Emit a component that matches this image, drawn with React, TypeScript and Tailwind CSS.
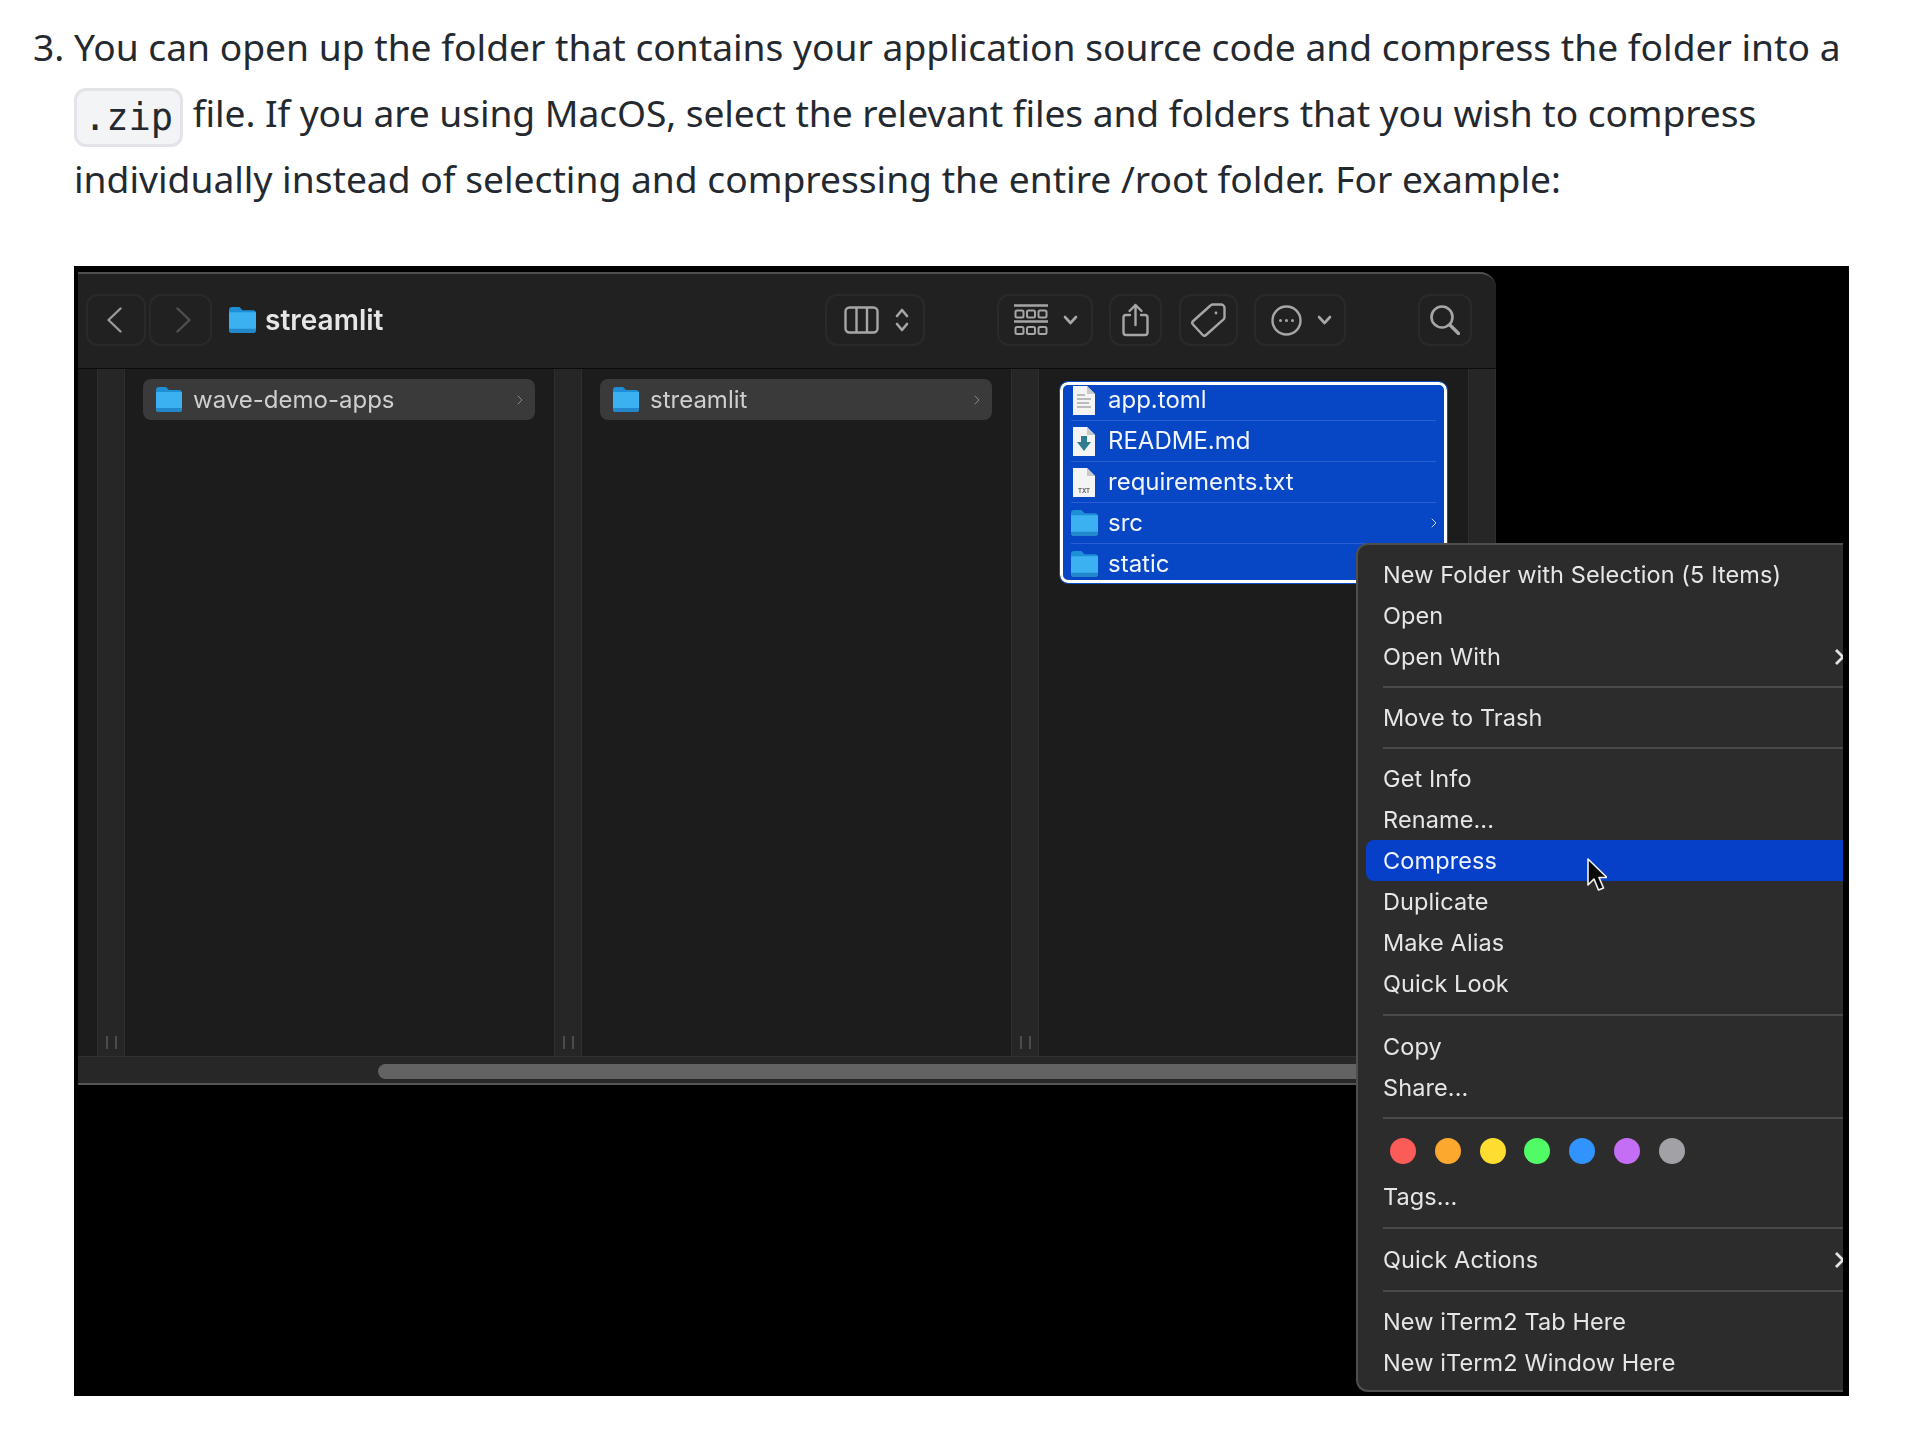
import React from 'react';
import { ChevronRight } from 'lucide-react';

const Folder: React.FC<{ className: string }> = ({ className }) => (
  <svg viewBox="0 0 26 25" className={className}>
    <path d="M0 3a3 3 0 0 1 3-3h7l3 3h10a3 3 0 0 1 3 3v2H0z" fill="#1e8fd6" />
    <path d="M0 5h26v17a3 3 0 0 1-3 3H3a3 3 0 0 1-3-3z" fill="#3bb1f1" />
    <path d="M0 21h26v1a3 3 0 0 1-3 3H3a3 3 0 0 1-3-3z" fill="#2388cb" />
  </svg>
);

const Doc: React.FC<{ kind: 'text' | 'md' | 'txt' }> = ({ kind }) => (
  <svg viewBox="0 0 22 29" className="w-[22px] h-[29px] shrink-0">
    <path d="M0 0h14l8 8v21H0z" fill="#f4f4f4" />
    <path d="M14 0l8 8h-8z" fill="#c9c9c9" />
    {kind === 'text' && (
      <g stroke="#a8a8a8" strokeWidth="1.5">
        <path d="M4 9h8M4 13h14M4 17h12M4 21h14" />
      </g>
    )}
    {kind === 'md' && <path d="M8 9h6v6h4l-7 9-7-9h4z" fill="#2f7d94" />}
    {kind === 'txt' && (
      <text x="11" y="25" textAnchor="middle" fontSize="6" fontWeight="700" fill="#666" fontFamily="Inter, sans-serif">
        TXT
      </text>
    )}
  </svg>
);

const ToolButton: React.FC<{ className: string; children: React.ReactNode }> = ({ className, children }) => (
  <div className={`h-[52px] shrink-0 flex items-center justify-center rounded-[12px] border-2 border-[#2a2a2a] ${className}`}>
    {children}
  </div>
);

const Chevron = () => (
  <svg viewBox="0 0 15 10" className="w-[15px] h-[10px]" fill="none" stroke="#a6a6a6" strokeWidth="2.6" strokeLinecap="round" strokeLinejoin="round">
    <path d="M2 2l5.5 6L13 2" />
  </svg>
);

const Toolbar = () => (
  <div className="h-[97px] shrink-0 bg-[#212121] border-t-2 border-[#4f4f4f] border-b border-b-[#0c0c0c] rounded-tr-[16px] flex items-center justify-between pl-2 pr-6 pb-[2px] text-[#e6e6e6]">
    <div className="flex items-center">
      <ToolButton className="w-[60px] pr-[3px]">
        <svg viewBox="0 0 15 26" className="w-[15px] h-[26px]" fill="none" stroke="#9a9a9a" strokeWidth="2.4" strokeLinecap="round" strokeLinejoin="round">
          <path d="M13.5 1.5L1.5 13l12 11.5" />
        </svg>
      </ToolButton>
      <ToolButton className="w-[63px] ml-[3px] pl-[5px]">
        <svg viewBox="0 0 15 26" className="w-[15px] h-[26px]" fill="none" stroke="#505050" strokeWidth="2.4" strokeLinecap="round" strokeLinejoin="round">
          <path d="M1.5 1.5L13.5 13l-12 11.5" />
        </svg>
      </ToolButton>
      <Folder className="w-[27px] h-[26px] ml-[17px]" />
      <span className="ml-[9px] text-[28px] font-semibold leading-none">streamlit</span>
    </div>
    <div className="flex items-center">
      <ToolButton className="w-[100px] gap-[16px] pl-[3px]">
        <svg viewBox="0 0 35 28" className="w-[35px] h-[28px]" fill="none" stroke="#a6a6a6" strokeWidth="2.4">
          <rect x="1.5" y="1.5" width="32" height="25" rx="4" />
          <path d="M12.5 1.5v25M23 1.5v25" />
        </svg>
        <svg viewBox="0 0 14 24" className="w-[14px] h-[24px]" fill="none" stroke="#a6a6a6" strokeWidth="2.6" strokeLinecap="round" strokeLinejoin="round">
          <path d="M2 8l5-6 5 6M2 16l5 6 5-6" />
        </svg>
      </ToolButton>
      <ToolButton className="w-[96px] ml-[72px] gap-[15px] pl-[2px]">
        <svg viewBox="0 0 34 32" className="w-[34px] h-[32px]" fill="none" stroke="#a6a6a6" strokeWidth="2">
          <path d="M0 1.5h34M0 17.5h34" strokeWidth="2.4" />
          <rect x="1.5" y="6.5" width="8" height="7" rx="1.5" />
          <rect x="13" y="6.5" width="8" height="7" rx="1.5" />
          <rect x="24.5" y="6.5" width="8" height="7" rx="1.5" />
          <rect x="1.5" y="23" width="8" height="7" rx="1.5" />
          <rect x="13" y="23" width="8" height="7" rx="1.5" />
          <rect x="24.5" y="23" width="8" height="7" rx="1.5" />
        </svg>
        <Chevron />
      </ToolButton>
      <ToolButton className="w-[53px] ml-[16px]">
        <svg viewBox="0 0 27 34" className="w-[27px] h-[34px]" fill="none" stroke="#a6a6a6" strokeWidth="2.4" strokeLinecap="round" strokeLinejoin="round">
          <path d="M8 12H4a2.5 2.5 0 0 0-2.5 2.5v15A2.5 2.5 0 0 0 4 32h19a2.5 2.5 0 0 0 2.5-2.5v-15A2.5 2.5 0 0 0 23 12h-4" />
          <path d="M13.5 22V2M7.5 8l6-6 6 6" />
        </svg>
      </ToolButton>
      <ToolButton className="w-[59px] ml-[17px]">
        <svg viewBox="0 0 35 34" className="w-[35px] h-[34px]" fill="none" stroke="#a6a6a6" strokeWidth="2.4" strokeLinejoin="round">
          <path d="M22 1.5h8a3.5 3.5 0 0 1 3.5 3.5v9a3 3 0 0 1-1 2.4L15 32a2.5 2.5 0 0 1-3.5-.2L2 21.5a2.5 2.5 0 0 1 .2-3.5L19.5 2.5a3.5 3.5 0 0 1 2.5-1z" />
          <circle cx="25" cy="10" r="1.4" fill="#a6a6a6" stroke="none" />
        </svg>
      </ToolButton>
      <ToolButton className="w-[92px] ml-[16px] gap-[15px] pl-[3px]">
        <svg viewBox="0 0 31 31" className="w-[31px] h-[31px]" fill="none" stroke="#a6a6a6" strokeWidth="2.4">
          <circle cx="15.5" cy="15.5" r="14" />
          <circle cx="9.5" cy="15.5" r="1.5" fill="#a6a6a6" stroke="none" />
          <circle cx="15.5" cy="15.5" r="1.5" fill="#a6a6a6" stroke="none" />
          <circle cx="21.5" cy="15.5" r="1.5" fill="#a6a6a6" stroke="none" />
        </svg>
        <Chevron />
      </ToolButton>
      <ToolButton className="w-[54px] ml-[72px]">
        <svg viewBox="0 0 30 30" className="w-[30px] h-[30px]" fill="none" stroke="#a6a6a6" strokeWidth="2.6" strokeLinecap="round">
          <circle cx="12" cy="12" r="10.5" />
          <path d="M20 20l8.5 8.5" strokeWidth="3.4" />
        </svg>
      </ToolButton>
    </div>
  </div>
);

const Strip: React.FC<{ handle?: boolean }> = ({ handle = true }) => (
  <div className="w-[28px] shrink-0 bg-[#262626] border-x border-[#2e2e2e] flex items-end justify-center gap-[7px] pb-[7px]">
    {handle && (
      <>
        <div className="w-[2px] h-[13px] bg-[#4c4c4c]" />
        <div className="w-[2px] h-[13px] bg-[#4c4c4c]" />
      </>
    )}
  </div>
);

const ParentColumn: React.FC<{ name: string }> = ({ name }) => (
  <>
    <Strip />
    <div className="w-[429px] shrink-0 pt-[10px] pl-[18px] pr-[19px]">
      <div className="h-[41px] rounded-[8px] bg-[#3a3a3a] flex items-center pl-[13px] pr-[7px] text-[24px] text-[#cfcfcf]">
        <Folder className="w-[26px] h-[25px] shrink-0" />
        <span className="ml-[11px] flex-1">{name}</span>
        <ChevronRight className="w-[16px] h-[16px] text-[#8a8a8a]" strokeWidth={1.5} />
      </div>
    </div>
  </>
);

const FileRow: React.FC<{ className: string; icon: React.ReactNode; name: string; more?: boolean }> = ({ className, icon, name, more }) => (
  <div className={`flex items-center ${className}`}>
    <div className="w-[36px] shrink-0 flex justify-center pl-[8px] pr-[2px]">{icon}</div>
    <span className="ml-[9px] flex-1">{name}</span>
    {more && <ChevronRight className="w-[16px] h-[16px] mr-[2px] text-[#cfd8f0]" strokeWidth={1.5} />}
  </div>
);

const SelectedFiles = () => (
  <div className="mt-[13px] ml-[21px] w-[387px] h-[201px] rounded-[8px] border-[3px] border-white outline outline-1 outline-[#0b4cc8] bg-[#0747c5] text-[24px] text-[#f2f5fb] overflow-hidden">
    <FileRow className="h-[35px] pb-[5px]" icon={<Doc kind="text" />} name="app.toml" />
    <div className="mx-[8px] h-px bg-[#2a5fcf]" />
    <FileRow className="h-[40px]" icon={<Doc kind="md" />} name="README.md" />
    <div className="mx-[8px] h-px bg-[#2a5fcf]" />
    <FileRow className="h-[40px]" icon={<Doc kind="txt" />} name="requirements.txt" />
    <div className="mx-[8px] h-px bg-[#2a5fcf]" />
    <FileRow className="h-[40px]" icon={<Folder className="w-[27px] h-[26px] shrink-0" />} name="src" more />
    <div className="mx-[8px] h-px bg-[#2a5fcf]" />
    <FileRow className="h-[36px] pt-[3px]" icon={<Folder className="w-[27px] h-[26px] shrink-0" />} name="static" />
  </div>
);

const MenuItem: React.FC<{ label: string; more?: boolean; active?: boolean; className?: string }> = ({ label, more, active, className = '' }) => (
  <div className={`h-[41px] shrink-0 flex items-center justify-between pl-[17px] ml-[8px] rounded-l-[8px] ${active ? 'bg-[#0640c8] text-[#f0f4ff]' : ''} ${className}`}>
    <span>{label}</span>
    {more && (
      <svg viewBox="0 0 12 18" className="w-[12px] h-[18px] -mr-[3px]" fill="none" stroke="#e4e4e4" strokeWidth="2.8">
        <path d="M2 2l7 7-7 7" />
      </svg>
    )}
  </div>
);

const MenuSep: React.FC<{ className?: string }> = ({ className = 'h-[20px]' }) => (
  <div className={`shrink-0 flex items-center pl-[25px] ${className}`}>
    <div className="w-full h-[2px] bg-[#4a4a4a]" />
  </div>
);

const tagColors = ['bg-[#fb5c57]', 'bg-[#fca82f]', 'bg-[#fedc30]', 'bg-[#50fb66]', 'bg-[#3093fe]', 'bg-[#c46ef5]', 'bg-[#a2a2a6]'];

const ContextMenu = () => (
  <div className="absolute left-[1282px] top-[277px] w-[487px] h-[849px] bg-[#2c2c2c] border-l-2 border-y-2 border-[#4e4e4e] rounded-l-[12px] pt-[9px] flex flex-col overflow-hidden text-[23.5px] text-[#e6e6e6] tracking-[0.1px]">
    <MenuItem label="New Folder with Selection (5 Items)" />
    <MenuItem label="Open" />
    <MenuItem label="Open With" more />
    <MenuSep />
    <MenuItem label="Move to Trash" />
    <MenuSep />
    <MenuItem label="Get Info" />
    <MenuItem label="Rename..." />
    <MenuItem label="Compress" active />
    <MenuItem label="Duplicate" />
    <MenuItem label="Make Alias" />
    <MenuItem label="Quick Look" />
    <MenuSep className="h-[22px]" />
    <MenuItem label="Copy" />
    <MenuItem label="Share..." />
    <MenuSep className="h-[19px]" />
    <div className="h-[47px] shrink-0 flex items-center gap-[18.8px] pl-[32px]">
      {tagColors.map(color => (
        <div key={color} className={`w-[26px] h-[26px] rounded-full ${color}`} />
      ))}
    </div>
    <MenuItem label="Tags..." className="mt-[2px]" />
    <MenuSep className="h-[22px]" />
    <MenuItem label="Quick Actions" more />
    <MenuSep className="h-[21px]" />
    <MenuItem label="New iTerm2 Tab Here" />
    <MenuItem label="New iTerm2 Window Here" />
  </div>
);

const Cursor = () => (
  <svg viewBox="0 0 20 34" className="absolute left-[1513px] top-[592px] w-[20px] h-[34px]">
    <path d="M1 1v26l6-6 4.5 11 5-2-4.5-10.5H20z" fill="#0a0a0a" stroke="#f5f5f5" strokeWidth="1.6" strokeLinejoin="round" />
  </svg>
);

const Screenshot = () => (
  <div className="relative mt-[54px] w-[1775px] h-[1130px] bg-black pl-[4px] pt-[6px] font-['Inter',sans-serif] blur-[0.5px]">
    <div className="w-[1418px] h-[813px] flex flex-col bg-[#1c1c1c] border-b-2 border-[#555555] rounded-tr-[16px]">
      <Toolbar />
      <div className="flex-1 flex pl-[19px]">
        <ParentColumn name="wave-demo-apps" />
        <ParentColumn name="streamlit" />
        <Strip />
        <div className="w-[429px] shrink-0">
          <SelectedFiles />
        </div>
        <Strip handle={false} />
      </div>
      <div className="h-[27px] shrink-0 bg-[#272727] border-t border-[#303030] pl-[300px] pt-[7px]">
        <div className="h-[15px] w-[1000px] rounded-full bg-[#636363]" />
      </div>
    </div>
    <ContextMenu />
    <Cursor />
  </div>
);

export default function App() {
  return (
    <div className="w-[1908px] h-[1440px] bg-white overflow-hidden font-['Noto_Sans',sans-serif] text-[#24292f]">
      <ol start={3} className="list-decimal pl-[74px] pt-[14px] text-[37.2px] leading-[66px]">
        <li>
          <p className="w-[1810px]">
            You can open up the folder that contains your application source code and compress the folder into a
            <br />
            <code className="font-['DejaVu_Sans_Mono',monospace] text-[37px] leading-none align-[-3px] bg-[#f3f4f6] border-[3px] border-[#e3e4e8] rounded-[12px] px-[7px] py-[5px]">.zip</code>{' '}
            <span className="tracking-[-0.08px]">file. If you are using MacOS, select the relevant files and folders that you wish to compress</span>
            <br />
            individually instead of selecting and compressing the entire /root folder. For example:
          </p>
          <Screenshot />
        </li>
      </ol>
    </div>
  );
}
